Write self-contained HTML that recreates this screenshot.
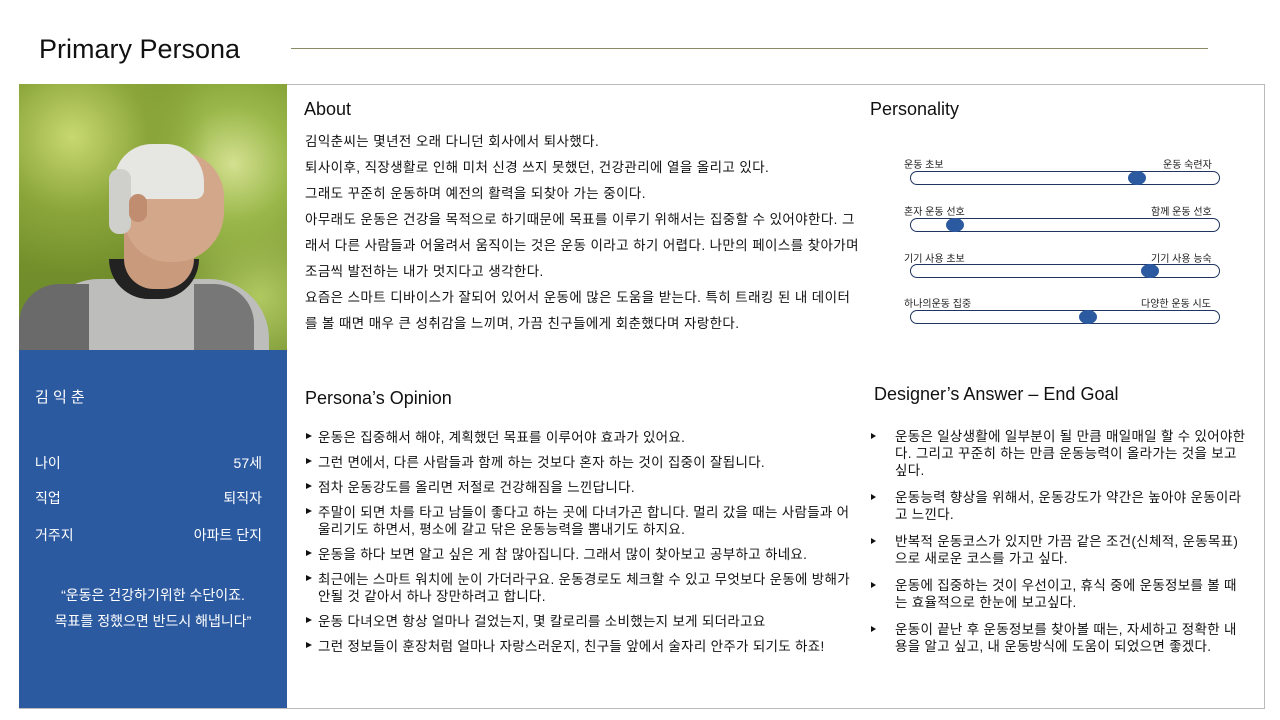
<!DOCTYPE html>
<html><head><meta charset="utf-8"><style>
*{margin:0;padding:0;box-sizing:border-box}
body{width:1280px;height:720px;background:#fff;position:relative;overflow:hidden;font-family:"Liberation Sans","Noto Sans CJK KR",sans-serif;color:#111}
.a{position:absolute;white-space:nowrap}
h1{position:absolute;left:39px;top:34px;font-size:27px;font-weight:400;color:#111}
.rule{position:absolute;left:291px;top:48px;width:917px;height:1px;background:#8a8a66}
.frame{position:absolute;left:19px;top:84px;width:1246px;height:625px;border:1px solid #bbb}
.photo{position:absolute;left:19px;top:84px;width:268px;height:266px;overflow:hidden;background:radial-gradient(circle at 20% 20%,#c8d870 0,#8aa53a 25%,transparent 45%),radial-gradient(circle at 80% 30%,#d4e090 0,#9ab84a 20%,transparent 40%),radial-gradient(circle at 90% 80%,#b0c860 0,transparent 30%),linear-gradient(#7e9a30,#6d8a2a)}
.blue{position:absolute;left:19px;top:350px;width:268px;height:358px;background:#2c5aa0;color:#fff}
.sec{font-size:18px;color:#111}
.p{font-size:13.5px;line-height:26px;letter-spacing:0.4px}
ul{list-style:none}
.op li{position:relative;padding-left:13px;font-size:13.5px;line-height:17px;margin-bottom:8px;letter-spacing:0.3px}
.op li:before{content:"";position:absolute;left:1px;top:4px;border-left:6px solid #111;border-top:3.5px solid transparent;border-bottom:3.5px solid transparent}
.dg li{position:relative;padding-left:25px;font-size:13.5px;line-height:17px;margin-bottom:10px;letter-spacing:0.3px}
.dg li:before{content:"";position:absolute;left:1px;top:5px;border-left:5px solid #111;border-top:3px solid transparent;border-bottom:3px solid transparent}
.trk{position:absolute;left:910px;width:310px;height:14px;border:1.5px solid #1f3560;border-radius:7px}
.kn{position:absolute;width:18px;height:14px;border-radius:50%;background:#2c5aa0}
.lb{position:absolute;font-size:10px;color:#222}
</style></head><body>
<h1>Primary Persona</h1><div class="rule"></div>
<div class="frame"></div>
<div class="photo">
<div style="position:absolute;left:20px;top:195px;width:230px;height:90px;border-radius:60px 60px 0 0;background:#bdbdbb"></div>
<div style="position:absolute;left:0px;top:200px;width:70px;height:80px;border-radius:40px 0 0 0;background:#6a6a6a"></div>
<div style="position:absolute;left:175px;top:200px;width:60px;height:80px;border-radius:0 40px 0 0;background:#777"></div>
<div style="position:absolute;left:90px;top:175px;width:90px;height:40px;border-radius:0 0 40px 40px;background:#222"></div>
<div style="position:absolute;left:105px;top:140px;width:70px;height:65px;background:#c99a7c;border-radius:0 0 30px 30px"></div>
<div style="position:absolute;left:105px;top:68px;width:100px;height:110px;border-radius:45px 45px 50px 45px;background:#d3a78a"></div>
<div style="position:absolute;left:95px;top:60px;width:90px;height:55px;border-radius:45px 45px 10px 20px;background:#e6e6e2"></div>
<div style="position:absolute;left:90px;top:85px;width:22px;height:65px;border-radius:10px;background:#cfcfcb"></div>
<div style="position:absolute;left:110px;top:110px;width:18px;height:28px;border-radius:9px;background:#c08d70"></div>
</div>
<div class="blue">
<div class="a" style="left:16px;top:36px;font-size:15px">김 익 춘</div>
<div class="a" style="left:16px;top:103px;font-size:14px">나이</div><div class="a" style="right:25px;top:103px;font-size:14px">57세</div>
<div class="a" style="left:16px;top:138px;font-size:14px">직업</div><div class="a" style="right:25px;top:138px;font-size:14px">퇴직자</div>
<div class="a" style="left:16px;top:175px;font-size:14px">거주지</div><div class="a" style="right:25px;top:175px;font-size:14px">아파트 단지</div>
<div class="a" style="left:0;width:268px;text-align:center;top:232px;font-size:14px;line-height:26px">“운동은 건강하기위한 수단이죠.<br>목표를 정했으면 반드시 해냅니다”</div>
</div>
<div class="a sec" style="left:304px;top:99px">About</div>
<div class="a p" style="left:305px;top:129px">김익춘씨는 몇년전 오래 다니던 회사에서 퇴사했다.<br>퇴사이후, 직장생활로 인해 미처 신경 쓰지 못했던, 건강관리에 열을 올리고 있다.<br>그래도 꾸준히 운동하며 예전의 활력을 되찾아 가는 중이다.<br>아무래도 운동은 건강을 목적으로 하기때문에 목표를 이루기 위해서는 집중할 수 있어야한다. 그<br>래서 다른 사람들과 어울려서 움직이는 것은 운동 이라고 하기 어렵다. 나만의 페이스를 찾아가며<br>조금씩 발전하는 내가 멋지다고 생각한다.<br>요즘은 스마트 디바이스가 잘되어 있어서 운동에 많은 도움을 받는다. 특히 트래킹 된 내 데이터<br>를 볼 때면 매우 큰 성취감을 느끼며, 가끔 친구들에게 회춘했다며 자랑한다.</div>
<div class="a sec" style="left:870px;top:99px">Personality</div>
<div class="lb" style="left:904px;top:156px">운동 초보</div><div class="lb" style="left:1163px;top:156px">운동 숙련자</div>
<div class="trk" style="top:171px"></div><div class="kn" style="left:1128px;top:171px"></div>
<div class="lb" style="left:904px;top:203px">혼자 운동 선호</div><div class="lb" style="left:1151px;top:203px">함께 운동 선호</div>
<div class="trk" style="top:218px"></div><div class="kn" style="left:946px;top:218px"></div>
<div class="lb" style="left:904px;top:250px">기기 사용 초보</div><div class="lb" style="left:1151px;top:250px">기기 사용 능숙</div>
<div class="trk" style="top:264px"></div><div class="kn" style="left:1141px;top:264px"></div>
<div class="lb" style="left:904px;top:295px">하나의운동 집중</div><div class="lb" style="left:1141px;top:295px">다양한 운동 시도</div>
<div class="trk" style="top:310px"></div><div class="kn" style="left:1079px;top:310px"></div>
<div class="a sec" style="left:305px;top:388px">Persona’s Opinion</div>
<ul class="op a" style="left:305px;top:429px;width:556px;white-space:normal">
<li>운동은 집중해서 해야, 계획했던 목표를 이루어야 효과가 있어요.</li>
<li>그런 면에서, 다른 사람들과 함께 하는 것보다 혼자 하는 것이 집중이 잘됩니다.</li>
<li>점차 운동강도를 올리면 저절로 건강해짐을 느낀답니다.</li>
<li>주말이 되면 차를 타고 남들이 좋다고 하는 곳에 다녀가곤 합니다. 멀리 갔을 때는 사람들과 어울리기도 하면서, 평소에 갈고 닦은 운동능력을 뽐내기도 하지요.</li>
<li>운동을 하다 보면 알고 싶은 게 참 많아집니다. 그래서 많이 찾아보고 공부하고 하네요.</li>
<li>최근에는 스마트 워치에 눈이 가더라구요. 운동경로도 체크할 수 있고 무엇보다 운동에 방해가 안될 것 같아서 하나 장만하려고 합니다.</li>
<li>운동 다녀오면 항상 얼마나 걸었는지, 몇 칼로리를 소비했는지 보게 되더라고요</li>
<li>그런 정보들이 훈장처럼 얼마나 자랑스러운지, 친구들 앞에서 술자리 안주가 되기도 하죠!</li>
</ul>
<div class="a sec" style="left:874px;top:384px">Designer’s Answer – End Goal</div>
<ul class="dg a" style="left:870px;top:428px;width:377px;white-space:normal">
<li>운동은 일상생활에 일부분이 될 만큼 매일매일 할 수 있어야한다. 그리고 꾸준히 하는 만큼 운동능력이 올라가는 것을 보고 싶다.</li>
<li>운동능력 향상을 위해서, 운동강도가 약간은 높아야 운동이라고 느낀다.</li>
<li>반복적 운동코스가 있지만 가끔 같은 조건(신체적, 운동목표)으로 새로운 코스를 가고 싶다.</li>
<li>운동에 집중하는 것이 우선이고, 휴식 중에 운동정보를 볼 때는 효율적으로 한눈에 보고싶다.</li>
<li>운동이 끝난 후 운동정보를 찾아볼 때는, 자세하고 정확한 내용을 알고 싶고, 내 운동방식에 도움이 되었으면 좋겠다.</li>
</ul>
</body></html>
